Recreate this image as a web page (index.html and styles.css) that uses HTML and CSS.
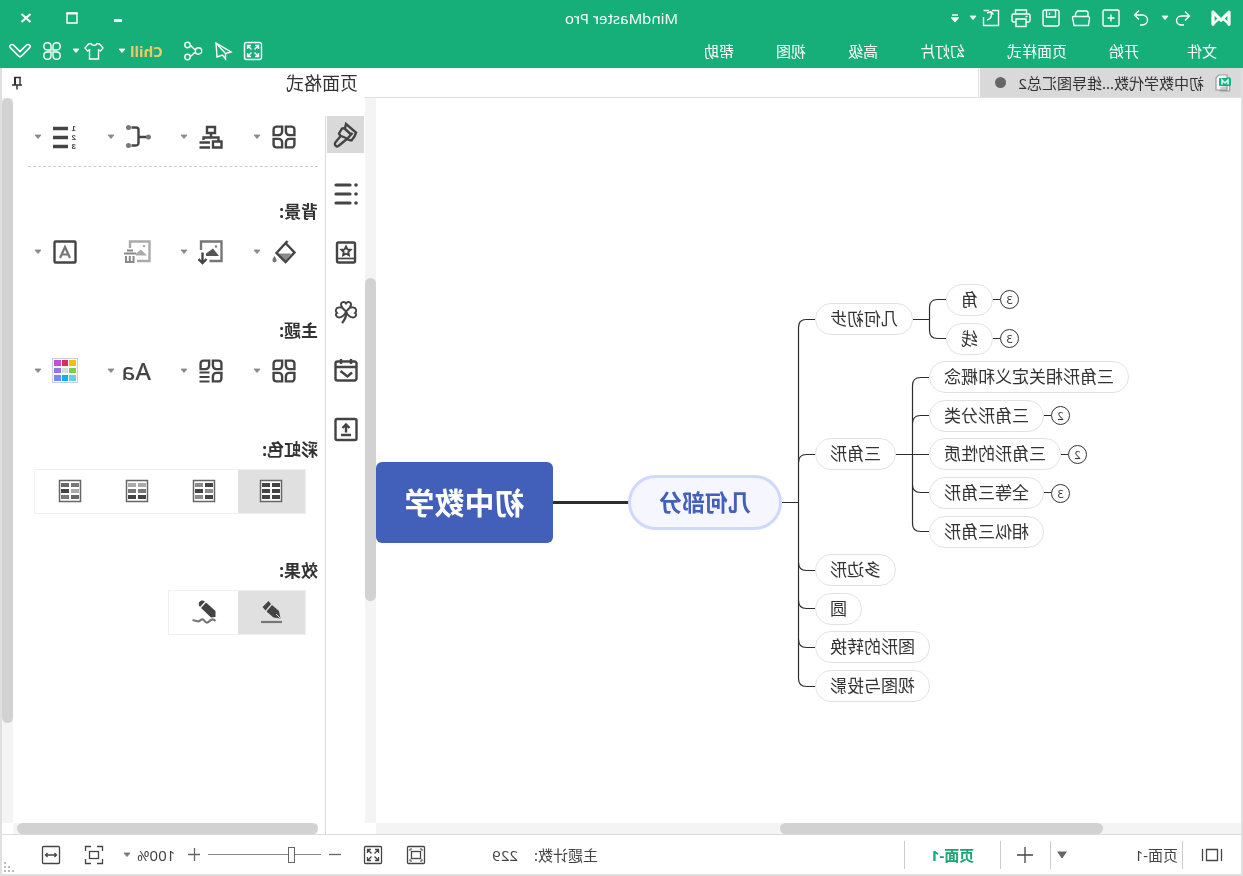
FILE: index.html
```html
<!DOCTYPE html>
<html lang="zh-CN">
<head>
<meta charset="utf-8">
<meta name="viewport" content="width=device-width, initial-scale=1">
<title>MindMaster Pro</title>
<link rel="stylesheet" href="styles.css">
</head>
<body>
<svg class="defs" width="0" height="0" aria-hidden="true">
  <symbol id="caret" viewBox="0 0 8 6"><path d="M1 1h6L4 4.6z" fill="currentColor" stroke="currentColor" stroke-width=".8" stroke-linejoin="round"/></symbol>
  <symbol id="petals" viewBox="0 0 26 26"><g fill="none" stroke="currentColor" stroke-width="2.4"><path d="M5.500 2.600h5.600v5a3.500 3.500 0 0 1-3.500 3.500H2.600V5.500a2.900 2.900 0 0 1 2.900-2.900z"/><path d="M20.500 2.600h-5.600v5a3.500 3.500 0 0 0 3.500 3.500h5V5.500a2.900 2.900 0 0 0-2.900-2.900z"/><path d="M5.500 23.400h5.600v-5a3.500 3.500 0 0 0-3.500-3.500H2.600v5.600a2.900 2.900 0 0 0 2.900 2.900z"/><path d="M20.500 23.400h-5.600v-5a3.500 3.500 0 0 1 3.500-3.500h5v5.600a2.900 2.900 0 0 1-2.900 2.900z"/></g></symbol>
</svg>
<div class="app">
  <header class="header">
    <div class="titlebar">
      <div class="quick">
        <svg class="logo" viewBox="0 0 20 18" width="20" height="18" aria-label="MindMaster"><path d="M2 15.2V3l8 8.200L18 3v12.200" fill="none" stroke="#fff" stroke-width="3.200" stroke-linejoin="round" stroke-linecap="round"/><path d="M2 15.200l6-5.500M18 15.200l-6-5.500" stroke="#fff" stroke-width="2.400" stroke-linecap="round"/></svg>
        <div class="undo">
          <button aria-label="撤销"><svg viewBox="0 0 20 20" width="20" height="20"><path d="M8 3.500L3.500 8 8 12.500M3.500 8h8a5 4.500 0 0 1 0 9H9"/></svg></button>
          <button class="thin" aria-label="撤销列表"><svg width="8" height="6"><use href="#caret"/></svg></button>
        </div>
        <button aria-label="重做"><svg viewBox="0 0 20 20" width="20" height="20"><path d="M12 2.500L16.500 7 12 11.500M16.500 7h-8a5 5 0 0 0 0 10H11"/></svg></button>
        <button aria-label="新建"><svg viewBox="0 0 20 20" width="20" height="20"><rect x="2" y="2" width="16" height="16" rx="1.500"/><path d="M10 6.500v7M6.500 10h7"/></svg></button>
        <button aria-label="打开"><svg viewBox="0 0 20 20" width="20" height="20"><path d="M3 8.500V5a2 2 0 0 1 2-2h8.500l2 2.500v3M2.500 17.500l-1-7.500a1.500 1.500 0 0 1 1.500-1.500h14.500a1 1 0 0 1 1 1l-1.500 8z"/></svg></button>
        <button aria-label="保存"><svg viewBox="0 0 20 20" width="20" height="20"><path d="M4 2h12a2 2 0 0 1 2 2v12a2 2 0 0 1-2 2H4a2 2 0 0 1-2-2V4a2 2 0 0 1 2-2zM5.500 2v7h9V2M11.500 4.500v2.500"/></svg></button>
        <button aria-label="打印"><svg viewBox="0 0 20 20" width="20" height="20"><path d="M4.500 6V2h11v4M4.500 14H2.500a1.500 1.500 0 0 1-1.500-1.500v-5A1.500 1.500 0 0 1 2.500 6h15A1.500 1.500 0 0 1 19 7.500v5a1.500 1.500 0 0 1-1.500 1.500h-2M5 11h10v7.500H5zM3.500 8.500h2"/></svg></button>
        <div class="split">
          <button aria-label="导出"><svg viewBox="0 0 20 20" width="20" height="20"><path d="M9 2.500H2.500v15H17.500V9M14 12C10.500 11 9 8 10 4M7.500 6.500l2.500-3 4 1.500M17.500 2.500H12"/></svg></button>
          <button class="thin" aria-label="导出列表"><svg width="8" height="6"><use href="#caret"/></svg></button>
        </div>
        <button class="thin" aria-label="自定义"><svg viewBox="0 0 8 12" width="8" height="12"><path d="M1 3h6"/><path d="M1 6h6L4 9.500z" fill="currentColor"/></svg></button>
      </div>
      <h1 class="title">MindMaster Pro</h1>
      <div class="window">
        <button aria-label="最小化"><svg viewBox="0 0 12 12" width="12" height="12"><path d="M2 8.500h8" stroke-width="3"/></svg></button>
        <button aria-label="最大化"><svg viewBox="0 0 12 12" width="12" height="12"><path d="M1 1h10v10H1z" stroke-width="1.400"/><path d="M.5 1.500h11" stroke-width="2"/></svg></button>
        <button aria-label="关闭"><svg viewBox="0 0 12 12" width="12" height="12"><path d="M1.500 2l9 8M10.500 2l-9 8" stroke-width="2.200"/></svg></button>
      </div>
    </div>
    <div class="menubar">
      <nav class="menu">
        <button>文件</button><button>开始</button><button>页面样式</button><button>幻灯片</button><button>高级</button><button>视图</button><button>帮助</button>
      </nav>
      <div class="tools">
        <button aria-label="全屏"><svg viewBox="0 0 20 20" width="20" height="20"><rect x="1.500" y="1.500" width="17" height="17" rx="2"/><path d="M8.500 8.500l-4-4M4.500 8V4.500H8M11.500 8.500l4-4M12 4.500h3.500V8M8.500 11.500l-4 4M4.500 12v3.500H8M11.500 11.500l4 4M15.500 12v3.500H12"/></svg></button>
        <button aria-label="发送"><svg viewBox="0 0 20 20" width="20" height="20"><path d="M17 2L2 11l5.500 1.500V18l3-4 5.500 2zM17 2L7.500 12.500"/></svg></button>
        <button aria-label="分享"><svg viewBox="0 0 20 20" width="20" height="20"><circle cx="4.500" cy="10" r="3.200"/><circle cx="15.500" cy="4" r="2.700"/><circle cx="15.500" cy="16" r="2.700"/><path d="M7.500 8.500C10 8 11 5 12.800 4.500M7.500 11.500c2.500.5 3.500 3.500 5.300 4"/></svg></button>
        <button class="brand">Chill<svg width="8" height="6"><use href="#caret"/></svg></button>
        <div class="split">
          <button aria-label="皮肤"><svg viewBox="0 0 20 20" width="20" height="20"><path d="M7 2.500C8 5 12 5 13 2.500l2.500.5L19 7l-2.500 3-2-1v9h-9V9l-2 1L1 7l3.500-4z"/></svg></button>
          <button class="thin" aria-label="皮肤列表"><svg width="8" height="6"><use href="#caret"/></svg></button>
        </div>
        <button aria-label="应用"><svg viewBox="0 0 20 20" width="20" height="20"><path d="M9 9H5.300A3.600 3.600 0 1 1 9 5.300zM11 9h3.700A3.600 3.600 0 1 0 11 5.300zM9 11H5.300A3.600 3.600 0 1 0 9 14.700zM11 11h3.700A3.600 3.600 0 1 1 11 14.700z"/></svg></button>
        <button aria-label="折叠功能区"><svg viewBox="0 0 24 20" width="24" height="20"><path stroke-width="1.700" d="M4 3.500c-2 0-3 2-1.500 3.300L10.500 15c1 1 2 1 3 0l8-8.200C23 5.500 22 3.500 20 3.500c-1 0-1.500.5-2 1L12 10.500 6 4.500c-.5-.5-1-1-2-1z"/></svg></button>
      </div>
    </div>
  </header>

  <div class="frame">
    <main class="main">
      <section class="workspace">
        <div class="doctabs">
          <button class="doctab">
            <svg viewBox="0 0 18 18" width="18" height="18"><path d="M5 1h8l3 3v12H5zM5 3.500H2.500v13.500h10" fill="#fff" stroke="#999" stroke-width="1.200"/><path d="M6 14h6" stroke="#bbb"/><rect x="1" y="4" width="12" height="8" rx="1" fill="#0cb87d" stroke="none"/><path d="M4 10.500V6l3 3 3-3v4.500" fill="none" stroke="#fff" stroke-width="1.400"/></svg>
            <span>初中数学代数...维导图汇总2</span><i class="dot"></i>
          </button>
        </div>
        <div class="canvas">
          <div class="map">
            <svg class="links" viewBox="0 0 865 725" width="865" height="725" aria-hidden="true">
              <g fill="none" stroke="#2d2d2d" stroke-width="1.200">
                <path d="M426 221.500h8.500q8 0 8 8V580.500q0 8-8 8H426"/>
                <path d="M442.500 364.500q0-8-8-8H426M442.500 464.500q0 8-8 8H426M442.500 502.500q0 8-8 8H426M442.500 541.500q0 8-8 8H426M442.500 404.500H459"/>
                <path d="M295 201.500h8.500q8 0 8 8v23q0 8-8 8H295M311.500 221.500H328"/>
                <path d="M312 279.500h8.500q8 0 8 8V425.500q0 8-8 8H312M328.500 325.500q0-8-8-8H312M328.500 386.500q0 8-8 8H312M312 356.500h33"/>
                <path d="M241 201.500h7M241 240.500h7M190 317.500h7M173 356.500h7M190 394.500h7"/>
                <path d="M612 404.500h76" stroke-width="3"/>
              </g>
            </svg>
            <div class="node root">初中数学</div>
            <div class="node branch">几何部分</div>
            <div class="node c1 r1">几何初步</div>
            <div class="node c1 r2">三角形</div>
            <div class="node c1 r3">多边形</div>
            <div class="node c1 r4">圆</div>
            <div class="node c1 r5">图形的转换</div>
            <div class="node c1 r6">视图与投影</div>
            <div class="node c3 s1">角</div>
            <div class="node c3 s2">线</div>
            <div class="node c2 t1">三角形相关定义和概念</div>
            <div class="node c2 t2">三角形分类</div>
            <div class="node c2 r2">三角形的性质</div>
            <div class="node c2 t4">全等三角形</div>
            <div class="node c2 t5">相似三角形</div>
            <button class="badge b1">3</button>
            <button class="badge b2">3</button>
            <button class="badge b3">2</button>
            <button class="badge b4">2</button>
            <button class="badge b5">3</button>
          </div>
        </div>
        <div class="track vtrack"><div class="thumb canvas-v"></div></div>
        <div class="track htrack"><div class="thumb canvas-h"></div></div>
      </section>

      <aside class="panel">
        <div class="panel-head">
          <h2>页面格式</h2>
          <button class="pin" aria-label="固定"><svg viewBox="0 0 12 14" width="12" height="14"><path d="M2 1.500h7M3 1v8" stroke="#333" stroke-width="1.400"/><path d="M8 1v8" stroke="#333" stroke-width="2"/><path d="M1 9h10M6 9v4.500" stroke="#333" stroke-width="1.500"/></svg></button>
        </div>
        <nav class="side">
          <button class="on" aria-label="页面格式"><svg viewBox="0 0 26 26" width="26" height="26"><path d="M13 2L3 10.500l1.500 4 3 4 2.500-.5 1.500-1.500 8.500 7a2.400 2.400 0 0 0 3.500-3.300l-5-6 1.500-2.700-3-5-3-.5z"/><path d="M15.500 5.500L8 12.500M6.500 11l6 6.500M12 16.500l7-3"/></svg></button>
          <button aria-label="大纲"><svg viewBox="0 0 26 26" width="26" height="26"><path d="M9 4h14M9 13h14M9 22h14" stroke-width="3.200" stroke-linecap="round"/><path d="M3 4h.01M3 13h.01M3 22h.01" stroke-width="3.600" stroke-linecap="round"/></svg></button>
          <button aria-label="图标"><svg viewBox="0 0 26 26" width="26" height="26"><rect x="4" y="2.500" width="18" height="20" rx="1.500"/><path d="M4 18.500h18" stroke-width="1.700"/><path d="M13 6.500l1.400 2.900 3.200.4-2.300 2.200.6 3.200-2.900-1.500-2.900 1.500.6-3.200-2.300-2.200 3.200-.4z" stroke-width="1.900"/></svg></button>
          <button aria-label="剪贴画"><svg viewBox="0 0 26 26" width="26" height="26"><path d="M13 12.500C10 10 8.500 8 8 6c-.3-3 3.500-4 5-1.500C14.500 2 18.300 3 18 6c-.5 2-2 4-5 6.500zM13 13C11 9.500 8 8 5.500 8.500 2.500 9 2 12.500 4 14c-2 1-1 4.500 2 4.500 3 0 5-2 7-5.500zM13 13c2-3.500 5-5 7.500-4.500 3 .5 3.500 4 1.500 5.500 2 1 1 4.500-2 4.500-3 0-5-2-7-5.500z" stroke-width="1.900"/><path d="M12.500 13c.5 5 2 8.500 4.500 11"/></svg></button>
          <button aria-label="任务"><svg viewBox="0 0 26 26" width="26" height="26"><rect x="2.500" y="3.500" width="21" height="19" rx="2"/><path d="M2.500 9h21M8 1v5M18 1v5M18.500 13l-7 5.500-4.500-4"/></svg></button>
          <button aria-label="导出"><svg viewBox="0 0 26 26" width="26" height="26"><rect x="2.500" y="2" width="21" height="21" rx="1.500"/><path d="M8 18h10M13 15.500V8M9.500 11L13 7.500l3.500 3.500"/></svg></button>
        </nav>
        <div class="props">
          <div class="row layout">
            <button aria-label="布局"><svg width="26" height="26"><use href="#petals"/></svg><svg width="8" height="6"><use href="#caret"/></svg></button>
            <button aria-label="结构"><svg viewBox="0 0 26 26" width="26" height="26"><path d="M9 3h8v6H9zM13 9v4M5.500 17v-3.500h15V16M2.500 17.500h8.500v6H2.500z"/><path d="M14 18.500h10.500M14 23.500h10.500"/></svg><svg width="8" height="6"><use href="#caret"/></svg></button>
            <button aria-label="连接线"><svg viewBox="0 0 26 26" width="26" height="26"><path d="M4 13h8M19.500 3.500H15a2.500 2.500 0 0 0-2.500 2.500v13a2.500 2.500 0 0 0 2.500 2.500h4.500"/><g class="dots"><circle cx="2.500" cy="13" r="2.500"/><circle cx="22.500" cy="3.500" r="2.500"/><circle cx="22.500" cy="21.500" r="2.500"/></g></svg><svg width="8" height="6"><use href="#caret"/></svg></button>
            <button aria-label="编号"><svg viewBox="0 0 26 26" width="26" height="26"><path d="M10 4.500h15M10 13.500h15M10 22.500h15" stroke-width="3.600"/><text x="2" y="7">1</text><text x="2" y="16">2</text><text x="2" y="25">3</text></svg><svg width="8" height="6"><use href="#caret"/></svg></button>
          </div>
          <section class="group first">
            <h3>背景:</h3>
            <div class="row">
              <button aria-label="背景颜色"><svg viewBox="0 0 26 26" width="26" height="26"><path d="M5.500 14.500h14l-7 8z" fill="#888" stroke="none"/><path d="M9.500 2l11 12-9 9-9-9.500 9-9.500"/><path d="M22.500 17c2.500 3.500 3 5.500 0 6.500-3-1-2.500-3 0-6.500z" fill="#777" stroke="none"/></svg><svg width="8" height="6"><use href="#caret"/></svg></button>
              <button aria-label="背景图片"><svg viewBox="0 0 26 26" width="26" height="26"><g stroke="#777"><path d="M23 11V2.500H2.500V22h12"/><circle cx="8" cy="7.500" r=".5" stroke-width="1.500"/></g><path d="M5 17l6-7.500 7 5v2.500z" fill="#555" stroke="none"/><path d="M21.500 13.500V24M17.500 20l4 4 4-4"/></svg><svg width="8" height="6"><use href="#caret"/></svg></button>
              <button class="off" aria-label="删除背景图片" disabled><svg viewBox="0 0 28 26" width="28" height="26"><path d="M21 9V2.500H1.500V22H14"/><path d="M15 14.500h12M17.500 17v6h7.500v-6M21.200 17v6M18 11.500h6" stroke="#888" stroke-width="2"/><path d="M4 16.500l6-6 5 4v2z" fill="currentColor" stroke="none"/><circle cx="7" cy="7" r=".5" stroke-width="1.500"/></svg></button>
              <button aria-label="水印"><svg viewBox="0 0 26 26" width="26" height="26"><rect x="2.500" y="2.500" width="21" height="21" rx="1"/><path d="M8 19l5-11 5 11M9.500 15.500h7" stroke="#777" stroke-width="2.200"/></svg><svg width="8" height="6"><use href="#caret"/></svg></button>
            </div>
          </section>
          <section class="group">
            <h3>主题:</h3>
            <div class="row">
              <button aria-label="主题"><svg width="26" height="26"><use href="#petals"/></svg><svg width="8" height="6"><use href="#caret"/></svg></button>
              <button aria-label="主题样式"><svg viewBox="0 0 26 26" width="26" height="26"><path d="M5.500 2.600h5.600v5a3.500 3.500 0 0 1-3.500 3.500H2.600V5.500a2.900 2.900 0 0 1 2.900-2.900zM20.500 2.600h-5.600v5a3.500 3.500 0 0 0 3.500 3.500h5V5.500a2.900 2.900 0 0 0-2.900-2.900zM5.500 23.400h5.600v-5a3.500 3.500 0 0 0-3.500-3.500H2.600v5.600a2.900 2.900 0 0 0 2.900 2.900z"/><path d="M14.500 14.500h10M14.500 19h10M14.500 23.500h10" stroke-width="2"/></svg><svg width="8" height="6"><use href="#caret"/></svg></button>
              <button class="font" aria-label="字体"><span>Aa</span><svg width="8" height="6"><use href="#caret"/></svg></button>
              <button aria-label="主题颜色"><svg viewBox="0 0 26 26" width="26" height="26"><rect x=".5" y=".5" width="25" height="24" fill="#fff" stroke="#c9cfe8" stroke-width="1"/><g stroke="none"><path fill="#edc20a" d="M2 2h7v6H2z"/><path fill="#dc2c56" d="M10 2h6v6h-6z"/><path fill="#bd51d0" d="M17 2h7v6h-7z"/><path fill="#79d048" d="M2 10h7v5H2z"/><path fill="#d9d9d9" d="M10 10h6v5h-6z"/><path fill="#9377ea" d="M17 10h7v5h-7z"/><path fill="#69cde0" d="M2 17h7v6H2z"/><path fill="#00b5f5" d="M10 17h6v6h-6z"/><path fill="#7788ff" d="M17 17h7v6h-7z"/></g></svg><svg width="8" height="6"><use href="#caret"/></svg></button>
            </div>
          </section>
          <section class="group">
            <h3>彩虹色:</h3>
            <div class="segments">
              <label><input type="radio" name="rainbow" aria-label="单色" checked><svg viewBox="0 0 24 24" width="24" height="24"><rect x="1.500" y="1.500" width="21" height="21" fill="#fff" stroke="#666" stroke-width="1.500"/><path fill="#444" stroke="none" d="M3 4h8v4H3zM13 4h8v4h-8zM3 10h8v4H3zM13 10h8v4h-8zM3 16h8v4H3zM13 16h8v4h-8z"/></svg></label>
              <label><input type="radio" name="rainbow" aria-label="彩虹一"><svg viewBox="0 0 24 24" width="24" height="24"><rect x="1.500" y="1.500" width="21" height="21" fill="#fff" stroke="#666" stroke-width="1.500"/><path fill="#444" stroke="none" d="M3 4h8v4H3zM13 10h8v4h-8zM3 16h8v4H3z"/><path fill="#8c8c8c" stroke="none" d="M13 4h8v4h-8zM3 10h8v4H3zM13 16h8v4h-8z"/></svg></label>
              <label><input type="radio" name="rainbow" aria-label="彩虹二"><svg viewBox="0 0 24 24" width="24" height="24"><rect x="1.500" y="1.500" width="21" height="21" fill="#fff" stroke="#666" stroke-width="1.500"/><path fill="#aaa" stroke="none" d="M3 4h8v4H3zM13 4h8v4h-8z"/><path fill="#777" stroke="none" d="M3 10h8v4H3zM13 10h8v4h-8z"/><path fill="#444" stroke="none" d="M3 16h8v4H3zM13 16h8v4h-8z"/></svg></label>
              <label><input type="radio" name="rainbow" aria-label="彩虹三"><svg viewBox="0 0 24 24" width="24" height="24"><rect x="1.500" y="1.500" width="21" height="21" fill="#fff" stroke="#666" stroke-width="1.500"/><path fill="#777" stroke="none" d="M3 4h8v4H3zM13 16h8v4h-8z"/><path fill="#666" stroke="none" d="M13 4h8v4h-8zM3 16h8v4H3z"/><path fill="#aaa" stroke="none" d="M3 10h8v4H3z"/><path fill="#444" stroke="none" d="M13 10h8v4h-8z"/></svg></label>
            </div>
          </section>
          <section class="group last">
            <h3>效果:</h3>
            <div class="segments">
              <label><input type="radio" name="effect" aria-label="标准" checked><svg viewBox="0 0 26 26" width="26" height="26"><path d="M2 23h21" stroke="#777" stroke-width="2.200"/><path fill="#444" stroke="none" d="M3.500 19.500L5 12l7-6 5.500 6.500-7 6zM13 5l2.500-3 6 6-3 3.500z"/><path d="M3.500 19.500l4.500-4.500" stroke="#e0e0e0" stroke-width="1"/></svg></label>
              <label><input type="radio" name="effect" aria-label="手绘"><svg viewBox="0 0 26 26" width="26" height="26"><path d="M1.500 22c3-3 5-1 6 0s3 3 5 0 4-1 5 0 2 0 7-1" stroke="#777" stroke-width="2.200"/><path fill="#444" stroke="none" d="M1.500 18V12l9.500-8.500 5 5.500-10 9.500zM12 2.500l2-1c3-.5 5 2 4 5L17 8z"/></svg></label>
            </div>
          </section>
        </div>
        <div class="track panel-vtrack"><div class="thumb panel-v"></div></div>
        <div class="track panel-htrack"><div class="thumb panel-h"></div></div>
      </aside>
    </main>

    <footer class="status">
      <div class="pages">
        <button class="nav-view" aria-label="页面导航"><svg viewBox="0 0 22 14" width="22" height="14"><path d="M1.500 1v12M20.500 1v12M5.500 1.500h11v11h-11z"/></svg></button>
        <label class="pick"><select aria-label="当前页面"><option>页面-1</option></select><svg viewBox="0 0 12 8" width="12" height="8"><path d="M1 .5h10L6.500 7h-1z" fill="#666" stroke="none"/></svg></label>
        <button class="add" aria-label="添加页面"><svg viewBox="0 0 18 18" width="18" height="18"><path d="M9 1v16M1 9h16"/></svg></button>
        <button class="page">页面-1</button>
      </div>
      <div class="view">
        <span class="count"><span>主题计数:</span><span>229</span></span>
        <div class="pair">
          <button aria-label="适合页面"><svg viewBox="0 0 20 20" width="20" height="20"><rect x="1.500" y="1.500" width="17" height="17" rx="1"/><rect x="5.500" y="6.500" width="9" height="7"/><path d="M4 6V4h2M14 4h2v2M4 14v2h2M16 14v2h-2" stroke-width="1"/></svg></button>
          <button aria-label="全屏"><svg viewBox="0 0 20 20" width="20" height="20"><rect x="1.500" y="1.500" width="17" height="17" rx="1"/><path d="M8.500 8.500L5 5M4.500 8V4.500H8M11.500 8.500L15 5M12 4.500h3.500V8M8.500 11.500L5 15M4.500 12v3.500H8M11.500 11.500L15 15M15.500 12v3.500H12"/></svg></button>
        </div>
        <div class="zoom">
          <button aria-label="缩小"><svg viewBox="0 0 14 14" width="14" height="14"><path d="M1 6.500h12"/></svg></button>
          <input class="slider" type="range" min="0" max="100" value="25" aria-label="缩放">
          <button aria-label="放大"><svg viewBox="0 0 14 14" width="14" height="14"><path d="M1 6.500h12M6.500 0v13"/></svg></button>
        </div>
        <button class="percent">100%<svg width="8" height="6"><use href="#caret"/></svg></button>
        <div class="pair">
          <button aria-label="适应窗口"><svg viewBox="0 0 20 20" width="20" height="20"><path d="M1.500 6V1.500H7M13 1.500h5.500V6M1.500 14v4.500H7M13 18.500h5.500V14"/><rect x="5.500" y="6.500" width="9" height="7"/></svg></button>
          <button aria-label="适应宽度"><svg viewBox="0 0 20 20" width="20" height="20"><rect x="1.500" y="1.500" width="17" height="17" rx="1"/><path d="M4.500 10h11M6.500 8l-2 2 2 2M13.500 8l2 2-2 2"/></svg></button>
        </div>
      </div>
      <svg class="grip" viewBox="0 0 10 10" width="10" height="10" aria-hidden="true"><path fill="#bbb" d="M8 0h2v2H8zM4 4h2v2H4zM8 4h2v2H8zM0 8h2v2H0zM4 8h2v2H4zM8 8h2v2H8z"/></svg>
    </footer>
  </div>
</div>
</body>
</html>
```
FILE: styles.css
```css
* { box-sizing: border-box; }

html, body { margin: 0; overflow: hidden; }

body {
  font: 15px/20px "Noto Sans", "Noto Sans CJK SC", sans-serif;
  color: #333;
  background: #fff;
}

button, input, select { font: inherit; color: inherit; margin: 0; padding: 0; }
button { display: flex; align-items: center; justify-content: center; border: 0; background: none; white-space: nowrap; }
svg { display: block; flex: none; fill: none; stroke: currentColor; }
h1, h2, h3 { margin: 0; font-weight: 400; white-space: nowrap; }
.defs { position: absolute; }

/* The window is shown as its mirror image. */
.app {
  display: flex;
  flex-direction: column;
  height: 100vh;
  transform: scaleX(-1);
}

.header { height: 68px; flex: none; background: #16ae79; color: #fff; }
.header svg { stroke-width: 1.4; }
.titlebar { display: grid; grid-template-columns: 1fr auto 1fr; align-items: center; height: 36px; }
.quick { display: flex; align-items: center; gap: 10px; padding-left: 12px; }
.undo { display: flex; gap: 4px; margin-left: 8px; }
.split { display: flex; gap: 4px; }
.title { font-size: 15px; line-height: 20px; }
.window { display: flex; justify-content: flex-end; padding-right: 3px; }
.window button { width: 46px; height: 32px; }
.menubar { display: flex; justify-content: space-between; align-items: center; height: 30px; }
.menu { display: flex; gap: 42px; padding-left: 26px; }
.menu button:first-child { margin-right: 6px; }
.tools { display: flex; align-items: center; gap: 10px; padding-right: 8px; }
.brand { gap: 4px; margin: 0 4px 0 10px; font-weight: 700; color: #f0c866; }
.brand svg { color: #fff; }

.frame {
  display: flex;
  flex-direction: column;
  flex: 1;
  min-height: 0;
  border: solid #e0e0e0;
  border-width: 0 2px 2px;
}
.main { display: flex; flex: 1; min-height: 0; }

.workspace { display: grid; flex: 1; min-width: 0; grid-template: 30px 1fr 11px / 1fr 12px; }
.doctabs { grid-column: 1 / 3; display: flex; border-bottom: 1px solid #e0e0e0; }
.doctab { gap: 10px; padding: 0 15px 0 9px; background: #d9d9d9; box-shadow: 1px 0 #fff, 2px 0 #e0e0e0; }
.dot { width: 11px; height: 11px; margin-left: 2px; border-radius: 50%; background: #666; }

.canvas { position: relative; overflow: hidden; }
.map { position: absolute; top: 0; right: 0; width: 865px; height: 725px; }
.node {
  position: absolute;
  height: 32px;
  padding: 0 14px;
  border: 1px solid #e2e2e2;
  border-radius: 16px;
  background: #fff;
  font-size: 17px;
  line-height: 30px;
  white-space: nowrap;
}
.root { right: 0; top: 364px; width: 177px; height: 81px; padding: 0; border: 0; border-radius: 6px; background: #425fba; color: #fff; font-size: 30px; font-weight: 700; line-height: 81px; text-align: center; }
.branch { right: 252px; top: 377px; height: 55px; padding: 0 28px; border: 3px solid #d0d8fc; border-radius: 28px; background: #f5f6ff; color: #425fba; font-size: 23px; font-weight: 700; line-height: 49px; }
.c1 { right: 439px; }
.c2 { right: 553px; }
.c3 { right: 570px; }
.s1 { top: 186px; }
.r1 { top: 205px; }
.s2 { top: 225px; }
.t1 { top: 263px; }
.t2 { top: 302px; }
.r2 { top: 340px; }
.t4 { top: 379px; }
.t5 { top: 418px; }
.r3 { top: 456px; }
.r4 { top: 495px; }
.r5 { top: 533px; }
.r6 { top: 572px; }
.badge { position: absolute; width: 19px; height: 19px; border: 1px solid #333; border-radius: 50%; background: #fff; font-size: 11px; line-height: 16px; }
.b1, .b2 { right: 624px; }
.b3, .b5 { right: 675px; }
.b4 { right: 692px; }
.b1 { top: 192px; }
.b2 { top: 231px; }
.b3 { top: 308px; }
.b4 { top: 347px; }
.b5 { top: 386px; }

.track { position: relative; background: #f4f4f4; }
.thumb { position: absolute; border-radius: 6px; background: #d2d2d2; }
.vtrack, .panel-vtrack { width: 11px; }
.canvas-v { top: 24.8%; width: 100%; height: 44.6%; }
.canvas-h { left: 16%; width: 37.3%; height: 100%; }
.panel-v { top: 0; width: 100%; height: 86.2%; }
.panel-h { left: 0; right: 4px; height: 100%; }

.panel { display: grid; flex: none; width: 362px; grid-template: 30px 1fr 11px / 39px 1fr 11px; }
.panel-head { grid-column: 1 / 4; display: flex; align-items: center; justify-content: space-between; padding: 0 9px 0 6px; }
.panel-head h2 { font-size: 18px; line-height: 24px; }
.side { grid-row: 2 / 4; display: flex; flex-direction: column; gap: 22px; margin-top: 18px; border-right: 1px solid #dcdcdc; color: #444; }
.side button { width: 37px; height: 37px; padding-right: 2px; }
.side svg, .row svg { stroke-width: 2.4; }
.side .on { background: #d9d9d9; }
.panel-htrack { grid-column: 2; margin-left: 7px; }
.props { min-width: 0; overflow: hidden; padding: 25px 15px 0 7px; color: #444; }
.row { display: flex; padding-left: 21px; }
.row button { flex: none; width: 73px; height: 28px; gap: 10px; justify-content: flex-start; }
.row button:last-child { width: 48px; }
.row svg + svg, .font svg { color: #888; }
.row text { font: bold 8px "Liberation Sans", sans-serif; fill: #444; stroke: none; }
.row .off { color: #aaa; }
.row .font { gap: 7px; font-size: 24px; line-height: 28px; font-weight: 500; }
.dots { fill: #777; stroke: none; }
.layout { padding-bottom: 15px; height: 44px; border-bottom: 1px dashed #ccc; }
.group { margin-top: 53px; }
.group.first { margin-top: 33px; }
.group.last { margin-top: 45px; }
.group h3 { margin-bottom: 14px; font-size: 17px; line-height: 24px; font-weight: 700; color: #333; }
.segments { display: inline-flex; margin: -7px 0 0 12px; padding-right: 2px; border: 1px solid #f0f0f0; vertical-align: top; }
.segments label { position: relative; display: flex; align-items: center; justify-content: center; width: 67px; height: 43px; padding-bottom: 1px; }
.segments input { position: absolute; inset: 0; width: 100%; height: 100%; opacity: 0; }
.segments label:has(input:checked) { background: #e0e0e0; }

.status { position: relative; display: flex; justify-content: space-between; height: 40px; flex: none; border-top: 1px solid #dcdcdc; color: #444; }
.status svg { stroke-width: 1.3; }
.pages, .view, .pair, .zoom { display: flex; align-items: center; }
.pages > * { height: 28px; }
.nav-view { width: 59px; border-right: 1px solid #ccc; }
.pick { display: flex; align-items: center; width: 132px; padding: 0 5px 0 4px; border-right: 1px solid #ccc; }
.pick select { flex: 1; height: 28px; border: 0; background: none; appearance: none; }
.add { width: 50px; border-right: 1px solid #ccc; }
.page { width: 96px; border-right: 1px solid #ccc; color: #17a673; font-weight: 700; }
.view { padding-right: 39px; }
.count { display: flex; gap: 16px; margin-right: 66px; }
.pair { gap: 23px; }
.zoom { gap: 7px; margin: 0 12px 0 21px; color: #666; }
.slider { width: 113px; height: 20px; appearance: none; background: linear-gradient(#888, #888) center / 100% 1px no-repeat; }
.slider::-webkit-slider-thumb { appearance: none; width: 7px; height: 16px; border: 1px solid #666; background: #fff; }
.percent { gap: 6px; margin-right: 19px; }
.percent svg { color: #777; }
.grip { position: absolute; right: 2px; bottom: 2px; stroke: none; }
```
